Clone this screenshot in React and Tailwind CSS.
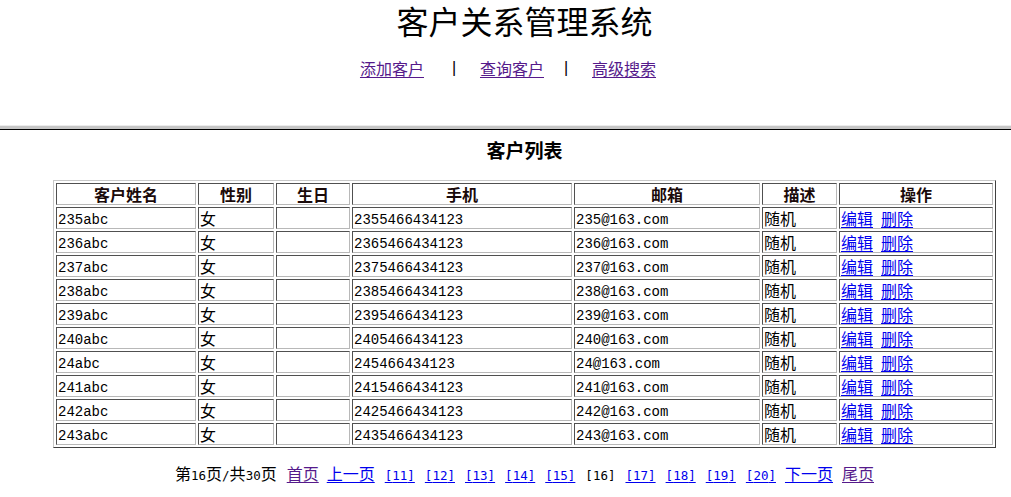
import React from "react";

const CJK = "[font-family:'Noto_Sans_CJK_SC',sans-serif] text-[16px] leading-[20px]";
const ASC = "[font-family:'Liberation_Mono',monospace] text-[14px] leading-[20px]";
const ASCP = "[font-family:'DejaVu_Sans_Mono',monospace] text-[12.5px] leading-[20px]";

function T({ s, a = ASC }) {
  const parts = s.split(/([\u3000-\u9fff\uff00-\uffef]+)/).filter((p) => p !== "");
  return (
    <>
      {parts.map((p, i) =>
        /[\u3000-\u9fff\uff00-\uffef]/.test(p) ? (
          <span key={i} className={CJK}>{p}</span>
        ) : (
          <span key={i} className={a}>{p}</span>
        )
      )}
    </>
  );
}

const rows = [
  ["235abc", "2355466434123", "235@163.com"],
  ["236abc", "2365466434123", "236@163.com"],
  ["237abc", "2375466434123", "237@163.com"],
  ["238abc", "2385466434123", "238@163.com"],
  ["239abc", "2395466434123", "239@163.com"],
  ["240abc", "2405466434123", "240@163.com"],
  ["24abc", "245466434123", "24@163.com"],
  ["241abc", "2415466434123", "241@163.com"],
  ["242abc", "2425466434123", "242@163.com"],
  ["243abc", "2435466434123", "243@163.com"],
];

const td =
  "h-[22px] p-0 border border-t-[#505050] border-l-[#505050] border-b-[#b8b8b8] border-r-[#b8b8b8] text-left align-middle text-black";
const th =
  "h-[22px] p-0 border border-t-[#505050] border-l-[#505050] border-b-[#b8b8b8] border-r-[#b8b8b8] text-center align-middle font-bold text-[#1a0a0a]";
const inner = "block h-[20px] leading-[20px] pl-[1px] overflow-hidden whitespace-nowrap";
const innerC =
  "h-[20px] flex items-center justify-center whitespace-nowrap [font-family:'Noto_Sans_CJK_SC',sans-serif] text-[16px] leading-[20px]";

const visited = "text-[#551a8b] underline underline-offset-2";
const link = "text-[#0000ee] underline underline-offset-2";

export default function App() {
  const pages = ["11", "12", "13", "14", "15"];
  const pages2 = ["17", "18", "19", "20"];
  const heads = ["客户姓名", "性别", "生日", "手机", "邮箱", "描述", "操作"];
  return (
    <div className="w-[1011px] h-[497px] overflow-hidden bg-white text-black">
      <div className="pl-[38px] flex flex-col items-center">
        <h1 className="h-[40px] flex items-center text-[32px] leading-[40px] font-normal text-black [font-family:'Noto_Sans_CJK_SC',sans-serif]">
          客户关系管理系统
        </h1>
        <div className="mt-[18px] h-[20px] leading-[20px] flex items-center pr-[33px] [font-family:'Noto_Sans_CJK_SC',sans-serif] text-[16px]">
          <a className={visited}>添加客户</a>
          <span className="ml-[28px] w-[4px] text-center [font-family:'Liberation_Sans',sans-serif]">|</span>
          <a className={visited + " ml-[24px]"}>查询客户</a>
          <span className="ml-[20px] w-[4px] text-center [font-family:'Liberation_Sans',sans-serif]">|</span>
          <a className={visited + " ml-[24px]"}>高级搜索</a>
        </div>
      </div>

      <div className="mt-[47px] h-[5px] border-t border-t-[#ececec] bg-[#c6c6c6] border-b border-b-black"></div>

      <div className="pl-[38px] flex flex-col items-center">
        <div className="mt-[10px] h-[20px] leading-[20px] font-bold text-[19px] [font-family:'Noto_Sans_CJK_SC',sans-serif]">
          客户列表
        </div>

        <table className="mt-[20px] table-fixed w-[943px] border-separate border-spacing-[2px] border border-t-[#c8c8c8] border-l-[#c8c8c8] border-b-[#404040] border-r-[#404040]">
          <colgroup>
            <col className="w-[140px]" />
            <col className="w-[76px]" />
            <col className="w-[74px]" />
            <col className="w-[220px]" />
            <col className="w-[186px]" />
            <col className="w-[75px]" />
            <col className="w-[154px]" />
          </colgroup>
          <thead>
            <tr>
              {heads.map((h) => (
                <th key={h} className={th}>
                  <div className={innerC}>{h}</div>
                </th>
              ))}
            </tr>
          </thead>
          <tbody>
            {rows.map((r) => (
              <tr key={r[0]}>
                <td className={td}><div className={inner}><T s={r[0]} /></div></td>
                <td className={td}><div className={inner}><span className={CJK}>女</span></div></td>
                <td className={td}><div className={inner}></div></td>
                <td className={td}><div className={inner}><T s={r[1]} /></div></td>
                <td className={td}><div className={inner}><T s={r[2]} /></div></td>
                <td className={td}><div className={inner}><span className={CJK}>随机</span></div></td>
                <td className={td}>
                  <div className={inner}>
                    <a className={link + " " + CJK}>编辑</a>
                    <a className={link + " " + CJK + " ml-[8px]"}>删除</a>
                  </div>
                </td>
              </tr>
            ))}
          </tbody>
        </table>

        <div className="mt-[15px] h-[22px] leading-[20px] block whitespace-nowrap">
          <span><T s="第16页/共30页" a={ASCP} /></span>
          <a className={visited + " ml-[10px] " + CJK}>首页</a>
          <a className={link + " ml-[8px] " + CJK}>上一页</a>
          {pages.map((p) => (
            <a key={p} className={link + " ml-[10px] " + ASCP}>[{p}]</a>
          ))}
          <span className={"ml-[10px] " + ASCP}>[16]</span>
          {pages2.map((p) => (
            <a key={p} className={link + " ml-[10px] " + ASCP}>[{p}]</a>
          ))}
          <a className={link + " ml-[9px] " + CJK}>下一页</a>
          <a className={visited + " ml-[9px] " + CJK}>尾页</a>
        </div>
      </div>
    </div>
  );
}
